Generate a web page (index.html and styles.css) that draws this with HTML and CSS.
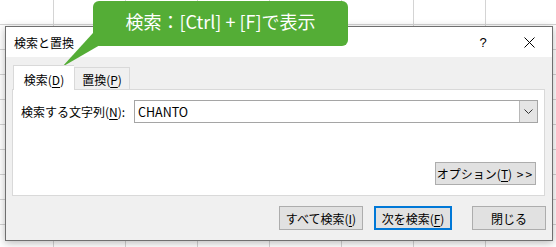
FILE: index.html
```html
<!DOCTYPE html>
<html lang="ja">
<head>
  <meta charset="UTF-8">
  <title>検索と置換</title>
  <link rel="stylesheet" href="styles.css">
</head>
<body>

  <div class="dialog">
    <div class="titlebar">
      <span class="title">検索と置換</span>
      <span class="help">?</span>
      <span class="close">
        <svg width="11" height="11" viewBox="0 0 11 11"><path d="M0.5 0.5 L10.5 10.5 M10.5 0.5 L0.5 10.5" stroke="#000" stroke-width="1"/></svg>
      </span>
    </div>

    <div class="tabs">
      <div class="tab active">検索(<u>D</u>)</div>
      <div class="tab">置換(<u>P</u>)</div>
    </div>

    <div class="panel">
      <div class="find-row">
        <label>検索する文字列(<u>N</u>):</label>
        <div class="combo">
          <span class="combo-text">CHANTO</span>
          <span class="combo-btn">
            <svg width="9" height="5" viewBox="0 0 9 5"><path d="M0.5 0.5 L4.5 4.5 L8.5 0.5" fill="none" stroke="#333" stroke-width="1"/></svg>
          </span>
        </div>
      </div>
      <div class="option-row">
        <button class="btn btn-option">オプション(<u>T</u>) <span class="chev">&gt;&gt;</span></button>
      </div>
    </div>

    <div class="footer">
      <button class="btn btn-all">すべて検索(<u>I</u>)</button>
      <button class="btn btn-next">次を検索(<u>F</u>)</button>
      <button class="btn btn-close">閉じる</button>
    </div>
  </div>

  <div class="callout">
    <svg class="callout-tail" width="60" height="70" viewBox="0 0 60 70"><polygon points="43,33 12,67 50,45" fill="#54ad36"/></svg>
    <div class="callout-box">検索：[Ctrl] + [F]で表示</div>
  </div>

</body>
</html>
```

FILE: styles.css
```css
body {
  margin: 0;
  width: 556px;
  height: 247px;
  overflow: hidden;
  font-family: "Noto Sans CJK JP", "Noto Sans", sans-serif;
  font-size: 12px;
  color: #000;
  background-color: #fff;
  background-image:
    repeating-linear-gradient(to right, transparent 0 53px, #d4d4d4 53px 54px, transparent 54px 72px),
    repeating-linear-gradient(to bottom, transparent 0 24px, #d4d4d4 24px 25px);
  background-position: 0 0, 0 0;
  position: relative;
}

u {
  text-decoration: underline;
  text-underline-offset: 2px;
}

.dialog {
  margin: 26px 0 0 5px;
  width: 548px;
  height: 215px;
  box-sizing: border-box;
  border: 1px solid #6f6f6f;
  background: #f0f0f0;
  box-shadow: 0 2px 8px rgba(0, 0, 0, 0.28);
  display: flex;
  flex-direction: column;
}

.titlebar {
  height: 30px;
  background: #fff;
  display: flex;
  align-items: center;
  padding-left: 8px;
}

.title {
  flex: 1;
  margin-top: 1px;
}

.help {
  font-family: "Liberation Sans", sans-serif;
  font-size: 13px;
  width: 46px;
  text-align: center;
}

.close {
  width: 46px;
  display: flex;
  justify-content: center;
}

.tabs {
  display: flex;
  align-items: flex-end;
  margin-top: 8px;
  padding-left: 7px;
  height: 24px;
}

.tab {
  box-sizing: border-box;
  height: 22px;
  width: 56px;
  border: 1px solid #d9d9d9;
  border-bottom: none;
  background: #f0f0f0;
  display: flex;
  align-items: center;
  justify-content: center;
  padding-top: 1px;
}

.tab.active {
  height: 25px;
  width: 61px;
  background: #fff;
  margin-bottom: -1px;
  position: relative;
  z-index: 1;
  border-right: none;
  padding-top: 2px;
}

.panel {
  margin: 0 7px 0 6px;
  height: 107px;
  box-sizing: border-box;
  border: 1px solid #d9d9d9;
  background: #fff;
  padding: 10px 6px 0 8px;
  display: flex;
  flex-direction: column;
}

.find-row {
  display: flex;
  align-items: center;
  justify-content: space-between;
}

.combo {
  width: 404px;
  height: 23px;
  box-sizing: border-box;
  border: 1px solid #a5a5a5;
  display: flex;
  align-items: stretch;
}

.combo-text {
  flex: 1;
  padding-left: 3px;
  display: flex;
  align-items: center;
  font-size: 12.5px;
}

.combo-btn {
  width: 17px;
  background: #e5e5e5;
  border-left: 1px solid #b8b8b8;
  display: flex;
  align-items: center;
  justify-content: center;
}

.option-row {
  display: flex;
  justify-content: flex-end;
  margin-top: 39px;
  padding-right: 2px;
}

.btn {
  font-family: inherit;
  font-size: 12px;
  height: 24px;
  box-sizing: border-box;
  background: #e1e1e1;
  border: 1px solid #adadad;
  padding: 0;
  color: #000;
}

.btn-option {
  width: 101px;
  height: 23px;
}

.chev {
  letter-spacing: 2px;
  margin-left: 2px;
}

.footer {
  display: flex;
  justify-content: flex-end;
  margin-top: 10px;
  padding-right: 6px;
}

.btn-all {
  width: 84px;
}

.btn-next {
  width: 78px;
  margin-left: 11px;
  border: 2px solid #0078d7;
}

.btn-close {
  width: 74px;
  margin-left: 20px;
}

.callout {
  position: absolute;
  left: 50px;
  top: 0;
}

.callout-tail {
  position: absolute;
  left: 0;
  top: 0;
}

.callout-box {
  position: absolute;
  left: 43px;
  top: 1px;
  width: 255px;
  height: 45px;
  box-sizing: border-box;
  border-radius: 6px;
  background: #54ad36;
  color: #fff;
  font-size: 18px;
  font-weight: 400;
  line-height: 40px;
  text-align: center;
  white-space: nowrap;
}
```
